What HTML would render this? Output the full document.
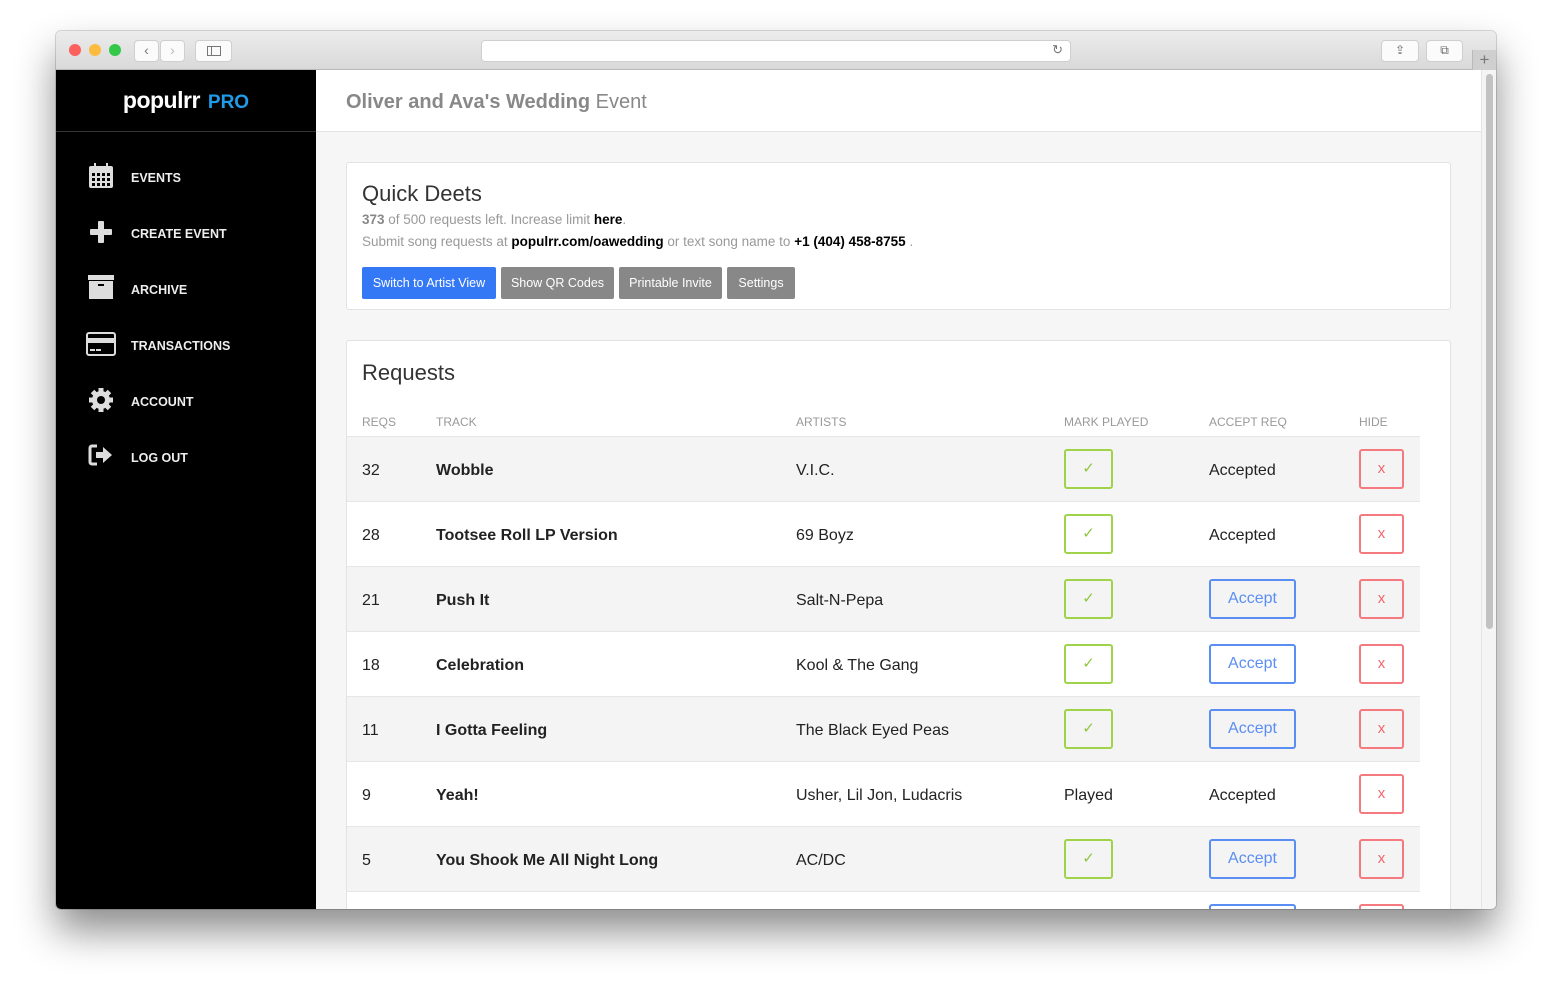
<!DOCTYPE html>
<html><head><meta charset="utf-8"><style>
*{box-sizing:border-box;margin:0;padding:0}
body{width:1552px;height:989px;background:#fff;font-family:"Liberation Sans",Arial,sans-serif;position:relative;overflow:hidden}
.win{position:absolute;left:56px;top:31px;width:1440px;height:878px;border-radius:5px;overflow:hidden;box-shadow:0 22px 40px rgba(0,0,0,.45),0 0 0 1px rgba(0,0,0,.15)}
.tb{position:absolute;left:0;top:0;width:1440px;height:39px;background:linear-gradient(#ececec,#d9d9d9);border-bottom:1px solid #b9b9b9}
.dot{position:absolute;top:13px;width:12px;height:12px;border-radius:50%}
.btn{position:absolute;top:9px;height:22px;background:#fbfbfb;border:1px solid #cfcfcf;border-radius:4px}
.side{position:absolute;left:0;top:39px;width:260px;height:839px;background:#000}
.logo{position:absolute;left:0;top:0;width:260px;height:62px;border-bottom:1px solid #333;text-align:center;padding-top:17px;color:#fff;font-weight:bold;font-size:23px;letter-spacing:-0.5px}
.logo span{color:#1e9be9;font-size:19px;margin-left:8px;letter-spacing:0}
.nav{position:absolute;left:75px;color:#eee;font-weight:bold;font-size:12.5px}
.ic{position:absolute;left:31px}
.main{position:absolute;left:260px;top:39px;width:1165px;height:839px;background:#f6f6f6}
.hdr{position:absolute;left:0;top:0;width:1165px;height:62px;background:#fff;border-bottom:1px solid #e3e3e3;padding:21px 30px;font-size:20px;color:#888}
.card{position:absolute;left:30px;width:1105px;background:#fff;border:1px solid #e2e2e2;border-radius:3px}
.sb{position:absolute;left:1425px;top:39px;width:15px;height:839px;background:#f4f4f4;border-left:1px solid #e4e4e4}
.g{color:#999;font-size:13.5px}
.b{color:#000;font-weight:bold}
.bt{position:absolute;top:104px;height:32px;color:#fff;font-size:12.5px;line-height:32px;text-align:center;border-radius:2px;background:#888}
.row{position:absolute;left:0;width:1073px;height:65px;border-top:1px solid #e6e6e6;font-size:16px;color:#222}
.row div{position:absolute;top:2px;line-height:64px}
.ok{left:717px;top:12px!important;width:49px;height:40px;border:2px solid #9fd34a;border-radius:3px;color:#8ec63f;text-align:center;line-height:36px!important;font-size:15px}
.x{left:1012px;top:12px!important;width:45px;height:40px;border:2px solid #f47a80;border-radius:3px;color:#f0656c;text-align:center;line-height:35px!important;font-size:15px}
.ac{left:862px;top:12px!important;width:87px;height:40px;border:2px solid #5b8ef2;border-radius:3px;color:#5b8ef2;text-align:center;line-height:36px!important;font-size:16px}
.th{position:absolute;top:74px;font-size:12px;color:#999}
</style></head><body>
<div class="win">
 <div class="tb">
  <div class="dot" style="left:13px;background:#fc605c"></div>
  <div class="dot" style="left:33px;background:#fdbc40"></div>
  <div class="dot" style="left:53px;background:#34c84a"></div>
  <div class="btn" style="left:78px;width:25px;color:#777;font-size:14px;text-align:center;line-height:19px">‹</div>
  <div class="btn" style="left:104px;width:25px;color:#bbb;font-size:14px;text-align:center;line-height:19px">›</div>
  <div class="btn" style="left:139px;width:37px"><div style="position:absolute;left:11px;top:5px;width:14px;height:10px;border:1px solid #777"></div><div style="position:absolute;left:15px;top:5px;width:1px;height:10px;background:#777"></div></div>
  <div class="btn" style="left:425px;width:590px;background:#fff"><span style="position:absolute;right:7px;top:1px;color:#777;font-size:13px">↻</span></div>
  <div class="btn" style="left:1325px;width:38px;color:#666;text-align:center;font-size:12px;line-height:19px">⇪</div>
  <div class="btn" style="left:1370px;width:37px;color:#666;text-align:center;font-size:12px;line-height:19px">⧉</div>
  <div style="position:absolute;left:1416px;top:19px;width:24px;height:20px;background:#cfcfcf;border-left:1px solid #b9b9b9;color:#777;text-align:center;font-size:17px;line-height:19px">+</div>
 </div>
 <div class="side">
  <div class="logo">populrr<span>PRO</span></div>
  <svg class="ic" style="top:92px" width="28" height="28" viewBox="0 0 28 28"><rect x="2" y="4" width="24" height="22" rx="2" fill="#ddd"/><g fill="#000"><rect x="5" y="11" width="3" height="3"/><rect x="10" y="11" width="3" height="3"/><rect x="15" y="11" width="3" height="3"/><rect x="20" y="11" width="3" height="3"/><rect x="5" y="16" width="3" height="3"/><rect x="10" y="16" width="3" height="3"/><rect x="15" y="16" width="3" height="3"/><rect x="20" y="16" width="3" height="3"/><rect x="5" y="21" width="3" height="3"/><rect x="10" y="21" width="3" height="3"/><rect x="15" y="21" width="3" height="3"/><rect x="20" y="21" width="3" height="3"/></g><rect x="7" y="1" width="2" height="6" fill="#ddd"/><rect x="19" y="1" width="2" height="6" fill="#ddd"/></svg>
  <div class="nav" style="top:101px">EVENTS</div>
  <svg class="ic" style="top:149px" width="28" height="26"><rect x="11" y="2" width="6" height="22" rx="1" fill="#ddd"/><rect x="3" y="10" width="22" height="6" rx="1" fill="#ddd"/></svg>
  <div class="nav" style="top:157px">CREATE EVENT</div>
  <svg class="ic" style="top:205px" width="28" height="26"><rect x="1" y="0" width="26" height="5" fill="#ddd"/><rect x="2" y="6" width="24" height="18" fill="#ddd"/><rect x="11" y="9" width="6" height="2" fill="#000"/></svg>
  <div class="nav" style="top:213px">ARCHIVE</div>
  <svg class="ic" style="top:262px;left:30px" width="32" height="26"><rect x="1" y="1" width="28" height="22" rx="2" fill="none" stroke="#ddd" stroke-width="2"/><rect x="1" y="6" width="28" height="5" fill="#ddd"/><rect x="4" y="17" width="5" height="2" fill="#ddd"/><rect x="10" y="17" width="5" height="2" fill="#ddd"/></svg>
  <div class="nav" style="top:269px">TRANSACTIONS</div>
  <svg class="ic" style="top:317px" width="28" height="26" viewBox="0 0 28 26"><g fill="#ddd" transform="translate(14 13)"><circle r="9"/><rect x="-2.5" y="-12" width="5" height="24"/><rect x="-2.5" y="-12" width="5" height="24" transform="rotate(45)"/><rect x="-2.5" y="-12" width="5" height="24" transform="rotate(90)"/><rect x="-2.5" y="-12" width="5" height="24" transform="rotate(135)"/></g><circle cx="14" cy="13" r="4" fill="#000"/></svg>
  <div class="nav" style="top:325px">ACCOUNT</div>
  <svg class="ic" style="top:373px" width="28" height="26"><path d="M10 3H5a2 2 0 0 0-2 2v14a2 2 0 0 0 2 2h5" fill="none" stroke="#ddd" stroke-width="3"/><path d="M9 9h7V4l9 8-9 8v-5H9z" fill="#ddd"/></svg>
  <div class="nav" style="top:381px">LOG OUT</div>
 </div>
 <div class="main">
  <div class="hdr"><b>Oliver and Ava's Wedding</b> Event</div>
  <div class="card" style="top:92px;height:148px">
   <div style="position:absolute;left:15px;top:18px;font-size:22px;color:#333">Quick Deets</div>
   <div class="g" style="position:absolute;left:15px;top:49px"><b style="color:#888">373</b> of 500 requests left. Increase limit <span class="b">here</span>.</div>
   <div class="g" style="position:absolute;left:15px;top:71px">Submit song requests at <span class="b">populrr.com/oawedding</span> or text song name to <span class="b">+1 (404) 458-8755</span> .</div>
   <div class="bt" style="left:15px;width:134px;background:#3478f6">Switch to Artist View</div>
   <div class="bt" style="left:154px;width:113px">Show QR Codes</div>
   <div class="bt" style="left:272px;width:103px">Printable Invite</div>
   <div class="bt" style="left:380px;width:68px">Settings</div>
  </div>
  <div class="card" style="top:270px;height:600px;overflow:hidden">
   <div style="position:absolute;left:15px;top:19px;font-size:22px;color:#333">Requests</div>
   <div class="th" style="left:15px">REQS</div><div class="th" style="left:89px">TRACK</div><div class="th" style="left:449px">ARTISTS</div><div class="th" style="left:717px">MARK PLAYED</div><div class="th" style="left:862px">ACCEPT REQ</div><div class="th" style="left:1012px">HIDE</div>
   <div class="row" style="top:95px;background:#f4f4f4"><div style="left:15px">32</div><div style="left:89px;font-weight:bold">Wobble</div><div style="left:449px">V.I.C.</div><div class="ok">✓</div><div style="left:862px">Accepted</div><div class="x">x</div></div>
   <div class="row" style="top:160px;background:#fff"><div style="left:15px">28</div><div style="left:89px;font-weight:bold">Tootsee Roll LP Version</div><div style="left:449px">69 Boyz</div><div class="ok">✓</div><div style="left:862px">Accepted</div><div class="x">x</div></div>
   <div class="row" style="top:225px;background:#f4f4f4"><div style="left:15px">21</div><div style="left:89px;font-weight:bold">Push It</div><div style="left:449px">Salt-N-Pepa</div><div class="ok">✓</div><div class="ac">Accept</div><div class="x">x</div></div>
   <div class="row" style="top:290px;background:#fff"><div style="left:15px">18</div><div style="left:89px;font-weight:bold">Celebration</div><div style="left:449px">Kool &amp; The Gang</div><div class="ok">✓</div><div class="ac">Accept</div><div class="x">x</div></div>
   <div class="row" style="top:355px;background:#f4f4f4"><div style="left:15px">11</div><div style="left:89px;font-weight:bold">I Gotta Feeling</div><div style="left:449px">The Black Eyed Peas</div><div class="ok">✓</div><div class="ac">Accept</div><div class="x">x</div></div>
   <div class="row" style="top:420px;background:#fff"><div style="left:15px">9</div><div style="left:89px;font-weight:bold">Yeah!</div><div style="left:449px">Usher, Lil Jon, Ludacris</div><div style="left:717px">Played</div><div style="left:862px">Accepted</div><div class="x">x</div></div>
   <div class="row" style="top:485px;background:#f4f4f4"><div style="left:15px">5</div><div style="left:89px;font-weight:bold">You Shook Me All Night Long</div><div style="left:449px">AC/DC</div><div class="ok">✓</div><div class="ac">Accept</div><div class="x">x</div></div>
   <div class="row" style="top:550px;background:#fff"><div class="ac"></div><div class="x"></div></div>
  </div>
 </div>
 <div class="sb"><div style="position:absolute;left:4px;top:4px;width:7px;height:555px;background:#c2c2c2;border-radius:4px"></div></div>
</div>
</body></html>
